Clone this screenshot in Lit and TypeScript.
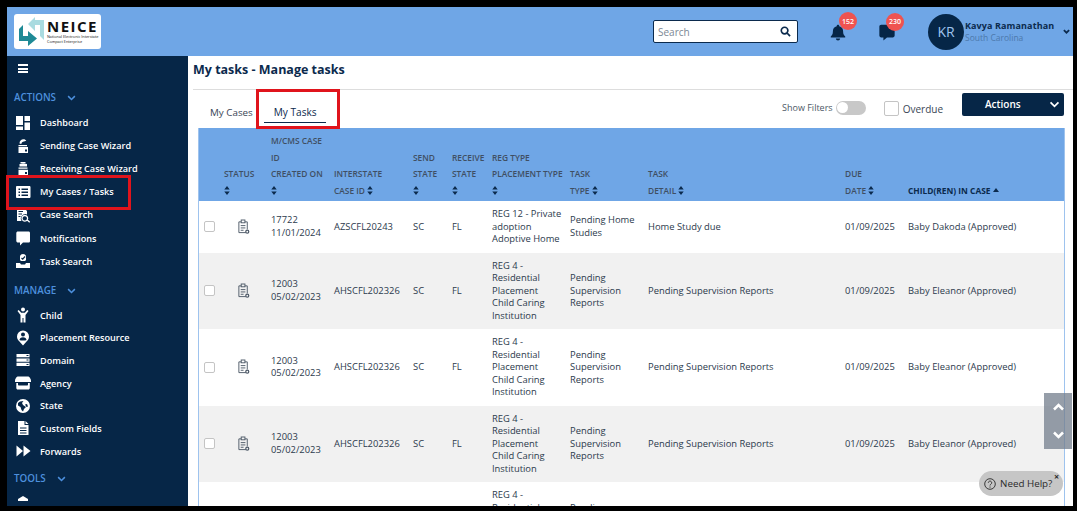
import { LitElement, html, css, svg } from "lit";
import { customElement } from "lit/decorators.js";

const icons: Record<string, any> = {
  dash: svg`<path d="M1 1h7v9H1zM9.500 1H15v5H9.500zM1 11.500h7V15H1zM9.500 7.500H15V15H9.500z"/>`,
  send: svg`<path d="M4.500 5.500C4.500 3 6.200 1.200 8.500 1.200c1.300 0 2.300.6 2.800 1.500L9 3.400C7.500 3.700 6.500 4.500 6.300 6zM3.500 7h8.500v1.200H3.500zM3.500 9h9.500v6H3.500z"/><rect x="10" y="11.500" width="2" height="2" fill="#062647"/>`,
  recv: svg`<path d="M5.500 1h5v1.200h-5zM4.500 3c2-.8 5.500-.8 7.500 0v2.500H4.500zM3.500 6.500h9v1.300h-9zM3.500 8.800h9.500V15H3.500z"/><rect x="10" y="11" width="2" height="2" fill="#062647"/>`,
  list: svg`<path fill-rule="evenodd" d="M2 2h12.500c.5 0 1 .5 1 1v10c0 .5-.5 1-1 1H2c-.5 0-1-.5-1-1V3c0-.5.5-1 1-1zm1.500 2.500v1.500H5V4.500zm0 3V9H5V7.500zm0 3V12H5v-1.500zM6.500 4.500V6H13V4.500zm0 3V9H13V7.500zm0 3V12H13v-1.500z"/>`,
  search: svg`<path d="M2 1h7l3 3v3.500a4.500 4.500 0 0 0-5.500 6.500H2zM3.500 4v1H8V4zm0 2.500v1H7v-1zm0 2.500v1H5.500V9z"/><path fill="none" stroke="#fff" stroke-width="1.300" d="M9.800 8.500a2.800 2.800 0 1 0 .01 0zM12 12.800l2.700 2.500"/>`,
  chat: svg`<path d="M3 1.500h10.500c1 0 1.500.6 1.500 1.500v8c0 1-.6 1.500-1.500 1.500H8l-3 3v-3H3c-1 0-1.700-.6-1.700-1.500V3c0-.9.7-1.500 1.700-1.500z"/>`,
  task: svg`<path d="M8 1a3 3 0 0 1 3 3v3l-1 1H6L5 7V4a3 3 0 0 1 3-3zM1 10h4l1 1.500h4L11 10h4v5H1z"/><path fill="none" stroke="#062647" stroke-width="1.200" d="M6.500 5l1.200 1.200L10 3.500"/>`,
  child: svg`<circle cx="8" cy="2.500" r="2"/><path d="M2.500 4l1.200-1 2.500 2.700h3.600L12.300 3l1.200 1L10.500 8v7.500H8.500V11h-1v4.500H5.500V8z"/>`,
  place: svg`<path fill-rule="evenodd" d="M8 .5a6 6 0 0 1 6 6c0 2-1 3.500-2 4.500l-4 4.500L4 11C3 10 2 8.500 2 6.500a6 6 0 0 1 6-6zM8 2.500a2 2 0 1 0 0 4 2 2 0 0 0 0-4zM4.500 10c1 .7 6 .7 7 0 0-1.500-1.500-2.800-3.500-2.800S4.500 8.500 4.500 10z"/>`,
  domain: svg`<path fill-rule="evenodd" d="M1.500 2h13v3.300h-13zM1.500 6.400h13v3.300h-13zM1.500 10.800h13V14h-13zM11.500 3v1h2V3zm0 4.500v1h2v-1zm0 4.400v1h2v-1z"/>`,
  agency: svg`<path d="M2.500 1.500h11c1.500 1 2.500 2.500 2.500 4.500v1H0V6c0-2 1-3.500 2.500-4.500zM1.300 8H3v1.500c0 .6.400 1 1 1h8c.6 0 1-.4 1-1V8h1.800v5c0 .8-.6 1.500-1.500 1.500H2.800c-.9 0-1.500-.7-1.500-1.500z"/>`,
  state: svg`<path fill-rule="evenodd" d="M8 1a7 7 0 1 1 0 14A7 7 0 0 1 8 1zM5 3.500L3 5v2.500L5.500 9l1 3 1.500 1.500L9 11l2-2-3-2-1-2 1.500-2zm7 2.500l-2 .5 1.500 2.500 1.500-.5z"/>`,
  file: svg`<path fill-rule="evenodd" d="M3 1h6.500v4H13.500v10H3zM10.500 1l3 3h-3zM5 7.500v1h6.500v-1zm0 2.500v1h6.500v-1zm0 2.500v1h6.500v-1z"/>`,
  fwd: svg`<path d="M1.500 2.500L8 8l-6.500 5.500zM8.500 2.500L15.500 8l-7 5.500z"/>`,
  tool: svg`<path d="M3 6l5-3 5 3v2H3z"/>`,
};

const ico = (n: string) => html`<svg class="ico" viewBox="0 0 16 16" fill="#fff">${icons[n]}</svg>`;
const chev = html`<svg class="chev" viewBox="0 0 12 8" fill="none" stroke="currentColor" stroke-width="2"><path d="M1.500 1.500L6 6l4.500-4.500"/></svg>`;
const sort = html`<svg class="sort" viewBox="0 0 6 10" fill="#0b2a4d"><path d="M3 0l3 4H0zM3 10L0 6h6z"/></svg>`;

const actions = [["dash","Dashboard"],["send","Sending Case Wizard"],["recv","Receiving Case Wizard"],["list","My Cases / Tasks"],["search","Case Search"],["chat","Notifications"],["task","Task Search"]];
const manage = [["child","Child"],["place","Placement Resource"],["domain","Domain"],["agency","Agency"],["state","State"],["file","Custom Fields"],["fwd","Forwards"]];

const reg4 = ["REG 4 -","Residential","Placement","Child Caring","Institution"];
const pend = {id:"12003",date:"05/02/2023",ic:"AHSCFL202326",reg:reg4,type:["Pending","Supervision","Reports"],detail:"Pending Supervision Reports",due:"01/09/2025",child:"Baby Eleanor (Approved)"};
const rows = [
  {id:"17722",date:"11/01/2024",ic:"AZSCFL20243",reg:["REG 12 - Private","adoption","Adoptive Home"],type:["Pending Home","Studies"],detail:"Home Study due",due:"01/09/2025",child:"Baby Dakoda (Approved)"},
  pend,pend,pend,pend,
];
const lines = (l: string[]) => l.map((t,i)=>html`${i?html`<br>`:""}${t}`);

@customElement("app-root")
export class AppRoot extends LitElement {
  static styles = css`
    :host{display:block;width:1077px;height:511px;background:#000;font-family:"Open Sans","Noto Sans",sans-serif;color:#1d2b3f;overflow:hidden;position:relative;box-sizing:border-box;padding:7px 4px 5px 7px;}
    .frame{display:flex;flex-direction:column;height:100%;background:#fff;overflow:hidden;}
    header{flex:0 0 49px;background:#6fa6e6;display:flex;align-items:center;}
    header>*{flex:none;}
    .logo{width:87px;height:35px;background:#fff;border-radius:3px;margin:-1px 0 0 7px;display:flex;align-items:center;gap:2px;box-sizing:border-box;padding:0 0 0 5px;}
    .logo svg{width:26px;height:31px;flex:none;}
    .ltext{display:flex;flex-direction:column;color:#111;}
    .neice{font:700 15px/15px "Open Sans",sans-serif;letter-spacing:1.500px;}
    .lsub{font:400 3.800px/5px "Open Sans",sans-serif;white-space:nowrap;}
    .search{margin-left:552px;width:145px;height:23px;box-sizing:border-box;background:#fff;border:1px solid #0b2a4d;border-radius:2px;display:flex;align-items:center;justify-content:space-between;padding:0 6px 0 4px;font-size:10px;color:#7b8794;}
    .search svg{width:11px;height:11px;}
    .bell{margin-left:32px;width:16px;height:17px;position:relative;top:1px;}
    .msg{margin-left:32px;width:18px;height:18px;position:relative;top:0;}
    .bell svg,.msg svg{width:100%;height:100%;display:block;}
    .badge{position:absolute;width:18px;height:18px;border-radius:50%;background:#ef5350;color:#fff;font-size:7px;font-weight:600;display:flex;align-items:center;justify-content:center;top:-12px;left:9px;}
    .msg .badge{left:8px;top:-10px;}
    .avatar{margin-left:32px;width:36px;height:36px;border-radius:50%;background:#062647;color:#9fc3ee;font-size:14px;display:flex;align-items:center;justify-content:center;}
    .who{margin-left:1px;width:93px;display:flex;flex-direction:column;white-space:nowrap;}
    .who b{font-size:9px;line-height:12px;font-weight:700;color:#0b2a4d;letter-spacing:.1px;}
    .who span{font-size:8.500px;line-height:12px;color:#4d79ac;}
    .uchev{width:7px;height:5px;color:#0b2a4d;margin-left:5px;}
    .body{flex:1;display:flex;min-height:0;}
    aside{width:181px;flex:none;background:#062647;color:#fff;overflow:hidden;padding-top:8px;box-sizing:border-box;}
    .burger{margin:0 0 0 11px;width:10px;height:9px;display:flex;flex-direction:column;justify-content:space-between;}
    .burger i{display:block;height:2px;background:#fff;}
    .sec{margin:17px 0 0 7px;height:16px;display:flex;align-items:center;gap:11px;color:#4d90de;font-size:9.800px;font-weight:600;line-height:16px;}
    .sec svg{width:9px;height:6px;}
    .sec.m{margin-top:10px;}
    .sec.t{margin-top:9px;}
    nav{margin-top:5px;display:flex;flex-direction:column;}
    .item{height:23.100px;display:flex;align-items:center;padding-left:8px;gap:9px;font-size:9.150px;font-weight:600;white-space:nowrap;color:#fff;}
    nav.n2 .item{height:22.700px;}
    nav.n3{margin-top:2px;}
    .ico{width:16px;height:16px;flex:none;}
    main{flex:1;min-width:0;overflow:hidden;padding-left:5px;}
    h1{margin:0;font-size:12.500px;line-height:28px;font-weight:700;color:#0b2a4d;height:26px;}
    .rule{height:1px;background:#ddd;margin-top:7px;}
    .bar{display:flex;align-items:center;height:38px;padding-left:17px;position:relative;}
    .tab{color:#3a4656;margin-top:6px;font-size:9.800px;}
    .tab.on{margin-left:21px;color:#0b2a4d;position:relative;font-size:10.100px;}
    .tab.on::after{content:"";position:absolute;left:-10px;right:-9px;top:17px;height:1px;background:#0b2a4d;}
    .sf{margin-left:auto;font-size:9px;color:#4c5866;margin-top:-3px;}
    .tg{width:30px;height:14px;border-radius:7px;background:#c8c8c8;margin:-3px 0 0 3px;display:flex;align-items:center;padding-left:1px;box-sizing:border-box;}
    .tg i{width:11px;height:11px;border-radius:50%;background:#fff;display:block;}
    .cb{width:11px;height:11px;box-sizing:border-box;border:1px solid #c4c4c4;border-radius:2px;background:#fff;display:block;flex:none;}
    .ov{width:15px;height:15px;margin:-1px 0 0 18px;}
    .ovt{margin:-1px 0 0 4px;font-size:10px;color:#3a4656;}
    .act{margin:-10px 9px 0 19px;width:102px;height:23px;background:#062647;color:#fff;border-radius:2px;font-size:10px;font-weight:600;display:flex;align-items:center;box-sizing:border-box;padding:0 4px 0 23px;justify-content:space-between;}
    .act svg{width:11px;height:7px;}
    .tw{margin:0 8px 0 5px;border-left:1px solid #9ec3ee;border-right:1px solid #9ec3ee;}
    table{border-collapse:collapse;table-layout:fixed;width:100%;}
    th{background:#6fa6e6;color:#3f4f63;font-size:8.400px;font-weight:600;line-height:16.500px;text-align:left;vertical-align:bottom;padding:5px 0 2px;white-space:nowrap;}
    th.dark{color:#0b2a4d;font-weight:700;}
    .sort{width:6px;height:9px;vertical-align:-1px;}
    .car{width:6px;height:4px;vertical-align:2px;}
    td{font-size:9.400px;line-height:12.500px;padding:7px 0;color:#2c3a4d;vertical-align:middle;}
    tr.alt td{background:#f1f1f1;}
    td .cb{margin-left:5px;}
    .st{width:14px;height:16px;display:block;margin-left:13px;}
    .red{position:absolute;border:3px solid #e0141c;box-sizing:border-box;pointer-events:none;}
    .r1{left:6px;top:175px;width:125px;height:35px;}
    .r2{left:256px;top:89px;width:84px;height:40px;}
    .scroll{position:absolute;left:1044px;top:393px;width:28px;height:56px;background:rgba(115,125,140,.75);display:flex;flex-direction:column;align-items:center;justify-content:space-around;color:#fff;}
    .scroll svg{width:13px;height:8px;}
    .help{position:absolute;left:979px;top:471px;width:84px;height:25px;border-radius:13px;background:#c6c6c6;color:#2a2a2a;font-size:9.800px;display:flex;align-items:center;gap:4px;padding-left:5px;box-sizing:border-box;}
    .help svg{width:12px;height:12px;}
    .x{position:absolute;left:75px;top:1px;font-size:9px;line-height:9px;font-weight:700;}
  `;
  render() {
    return html`<div class="frame">
      <header>
        <div class="logo">
          <svg viewBox="19 16 26 31"><path fill="#a9dbe0" d="M28 24L35 17V20H44V40L40 36V25H35V31Z"/><path fill="#1f8a96" d="M19 29L23 25V36H28V31L37 38.500L28 46V41H19Z"/></svg>
          <div class="ltext"><span class="neice">NEICE</span><span class="lsub">National Electronic Interstate</span><span class="lsub">Compact Enterprise</span></div>
        </div>
        <div class="search"><span>Search</span><svg viewBox="0 0 12 12" fill="none" stroke="#0b2a4d" stroke-width="1.800"><circle cx="5" cy="5" r="3.600"/><path d="M7.800 7.800L11 11"/></svg></div>
        <div class="bell"><svg viewBox="0 0 18 20" fill="#062647"><path d="M9 1c1 0 1.500.7 1.500 1.500C13.500 3.200 15 5.500 15 8.500c0 3.500 1 4.700 2.500 6.200V16H.5v-1.300C2 13.200 3 12 3 8.500c0-3 1.500-5.300 4.500-6C7.500 1.700 8 1 9 1zM6.500 17h5a2.500 2.500 0 0 1-5 0z"/></svg><span class="badge">152</span></div>
        <div class="msg"><svg viewBox="0 0 18 20" fill="#062647"><path d="M2.500 2h13c1 0 2 .8 2 2v10c0 1-1 2-2 2H9l-4 3.500V16H2.500c-1 0-2-1-2-2V4c0-1.200 1-2 2-2z"/></svg><span class="badge">230</span></div>
        <div class="avatar">KR</div>
        <div class="who"><b>Kavya Ramanathan</b><span>South Carolina</span></div>
        <svg class="uchev" viewBox="0 0 12 8" fill="none" stroke="currentColor" stroke-width="3"><path d="M1.500 1.500L6 6l4.500-4.500"/></svg>
      </header>
      <div class="body">
        <aside>
          <div class="burger"><i></i><i></i><i></i></div>
          <div class="sec">ACTIONS ${chev}</div>
          <nav>${actions.map(([i,t])=>html`<div class="item">${ico(i)}<span>${t}</span></div>`)}</nav>
          <div class="sec m">MANAGE ${chev}</div>
          <nav class="n2">${manage.map(([i,t])=>html`<div class="item">${ico(i)}<span>${t}</span></div>`)}</nav>
          <div class="sec t">TOOLS ${chev}</div>
          <nav class="n3"><div class="item">${ico("tool")}<span></span></div></nav>
        </aside>
        <main>
          <h1>My tasks - Manage tasks</h1>
          <div class="rule"></div>
          <div class="bar">
            <span class="tab">My Cases</span><span class="tab on">My Tasks</span>
            <span class="sf">Show Filters</span><span class="tg"><i></i></span>
            <span class="cb ov"></span><span class="ovt">Overdue</span>
            <div class="act"><span>Actions</span>${chev}</div>
          </div>
          <div class="tw"><table>
            <colgroup><col style="width:25px"><col style="width:47px"><col style="width:63px"><col style="width:79px"><col style="width:39px"><col style="width:40px"><col style="width:78px"><col style="width:78px"><col style="width:197px"><col style="width:63px"><col></colgroup>
            <thead><tr>
              <th></th><th>STATUS<br>${sort}</th>
              <th>M/CMS CASE<br>ID<br>CREATED ON<br>${sort}</th>
              <th>INTERSTATE<br>CASE ID ${sort}</th>
              <th>SEND<br>STATE<br>${sort}</th>
              <th>RECEIVE<br>STATE<br>${sort}</th>
              <th>REG TYPE<br>PLACEMENT TYPE<br>${sort}</th>
              <th>TASK<br>TYPE ${sort}</th>
              <th>TASK<br>DETAIL ${sort}</th>
              <th>DUE<br>DATE ${sort}</th>
              <th class="dark">CHILD(REN) IN CASE <svg class="car" viewBox="0 0 6 4" fill="#0b2a4d"><path d="M3 0l3 4H0z"/></svg></th>
            </tr></thead>
            <tbody>${rows.map((r,i)=>html`<tr class=${i%2?"alt":""}>
              <td><span class="cb"></span></td>
              <td><svg class="st" viewBox="0 0 15 17" fill="none" stroke="#4c5866" stroke-width="1"><path d="M9.500 14.500H2V3h2.500M8.500 3H11v8"/><rect x="4.500" y="1" width="4" height="3"/><path d="M4 7h5M4 9.500h5M4 12h3"/><circle cx="11" cy="13.500" r="1.600" stroke-width="1.300"/></svg></td>
              <td>${r.id}<br>${r.date}</td>
              <td>${r.ic}</td><td>SC</td><td>FL</td>
              <td>${lines(r.reg)}</td><td>${lines(r.type)}</td>
              <td>${r.detail}</td><td>${r.due}</td><td>${r.child}</td>
            </tr>`)}</tbody>
          </table></div>
        </main>
      </div>
      <div class="red r1"></div>
      <div class="red r2"></div>
      <div class="scroll">
        <svg viewBox="0 0 12 8" fill="none" stroke="currentColor" stroke-width="2.500"><path d="M1.500 6.500L6 2l4.500 4.500"/></svg>
        <svg viewBox="0 0 12 8" fill="none" stroke="currentColor" stroke-width="2.500"><path d="M1.500 1.500L6 6l4.500-4.500"/></svg>
      </div>
      <div class="help">
        <svg viewBox="0 0 12 12" fill="none" stroke="#2a2a2a" stroke-width=".9"><circle cx="6" cy="6" r="5.300"/><path d="M4.300 4.700a1.700 1.700 0 1 1 2.600 1.500c-.6.4-.9.700-.9 1.300M6 8.500v1.200"/></svg>
        <span>Need Help?</span><span class="x">×</span>
      </div>
    </div>`;
  }
}
